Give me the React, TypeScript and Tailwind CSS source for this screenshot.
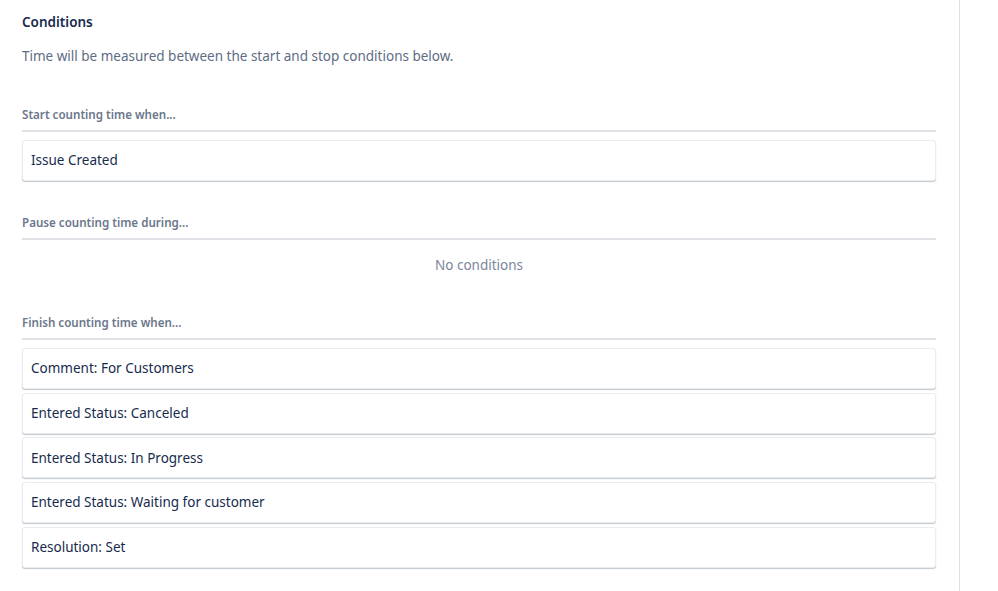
import React from 'react';

const font = { fontFamily: '"Noto Sans", "Liberation Sans", sans-serif' };

const Card = ({ label }: { label: string }) => (
  <div className="h-[41px] flex items-center px-[8px] bg-white rounded-[3px] border border-[#ebecf0] shadow-[0_1px_1px_rgba(9,30,66,0.25)] text-[13.5px] text-[#172b4d]">
    {label}
  </div>
);

const SectionLabel = ({ children }: { children: React.ReactNode }) => (
  <div className="text-[11.6px] leading-[16px] font-semibold text-[#6b778c] pb-[7px] border-b-2 border-[#dfe1e6]">{children}</div>
);

export default function App() {
  const finish = [
    'Comment: For Customers',
    'Entered Status: Canceled',
    'Entered Status: In Progress',
    'Entered Status: Waiting for customer',
    'Resolution: Set',
  ];
  return (
    <div className="w-[998px] h-[591px] bg-white flex overflow-hidden" style={font}>
      <div className="w-[960px] border-r border-[#dfe1e6] pl-[22px] pr-[23px] pt-[12px]">
        <h2 className="text-[13.5px] font-semibold text-[#172b4d] leading-[20px]">Conditions</h2>
        <p className="mt-[14px] text-[13.5px] text-[#5e6c84] leading-[20px]">
          Time will be measured between the start and stop conditions below.
        </p>

        <div className="mt-[41px]">
          <SectionLabel>Start counting time when...</SectionLabel>
          <div className="mt-[8px]">
            <Card label="Issue Created" />
          </div>
        </div>

        <div className="mt-[34px]">
          <SectionLabel>Pause counting time during...</SectionLabel>
          <div className="text-center text-[13.5px] leading-[20px] text-[#7a869a] pt-[15px]">No conditions</div>
        </div>

        <div className="mt-[40px]">
          <SectionLabel>Finish counting time when...</SectionLabel>
          <div className="mt-[8px] flex flex-col gap-[3.7px]">
            {finish.map((f) => (
              <Card key={f} label={f} />
            ))}
          </div>
        </div>
      </div>
    </div>
  );
}
